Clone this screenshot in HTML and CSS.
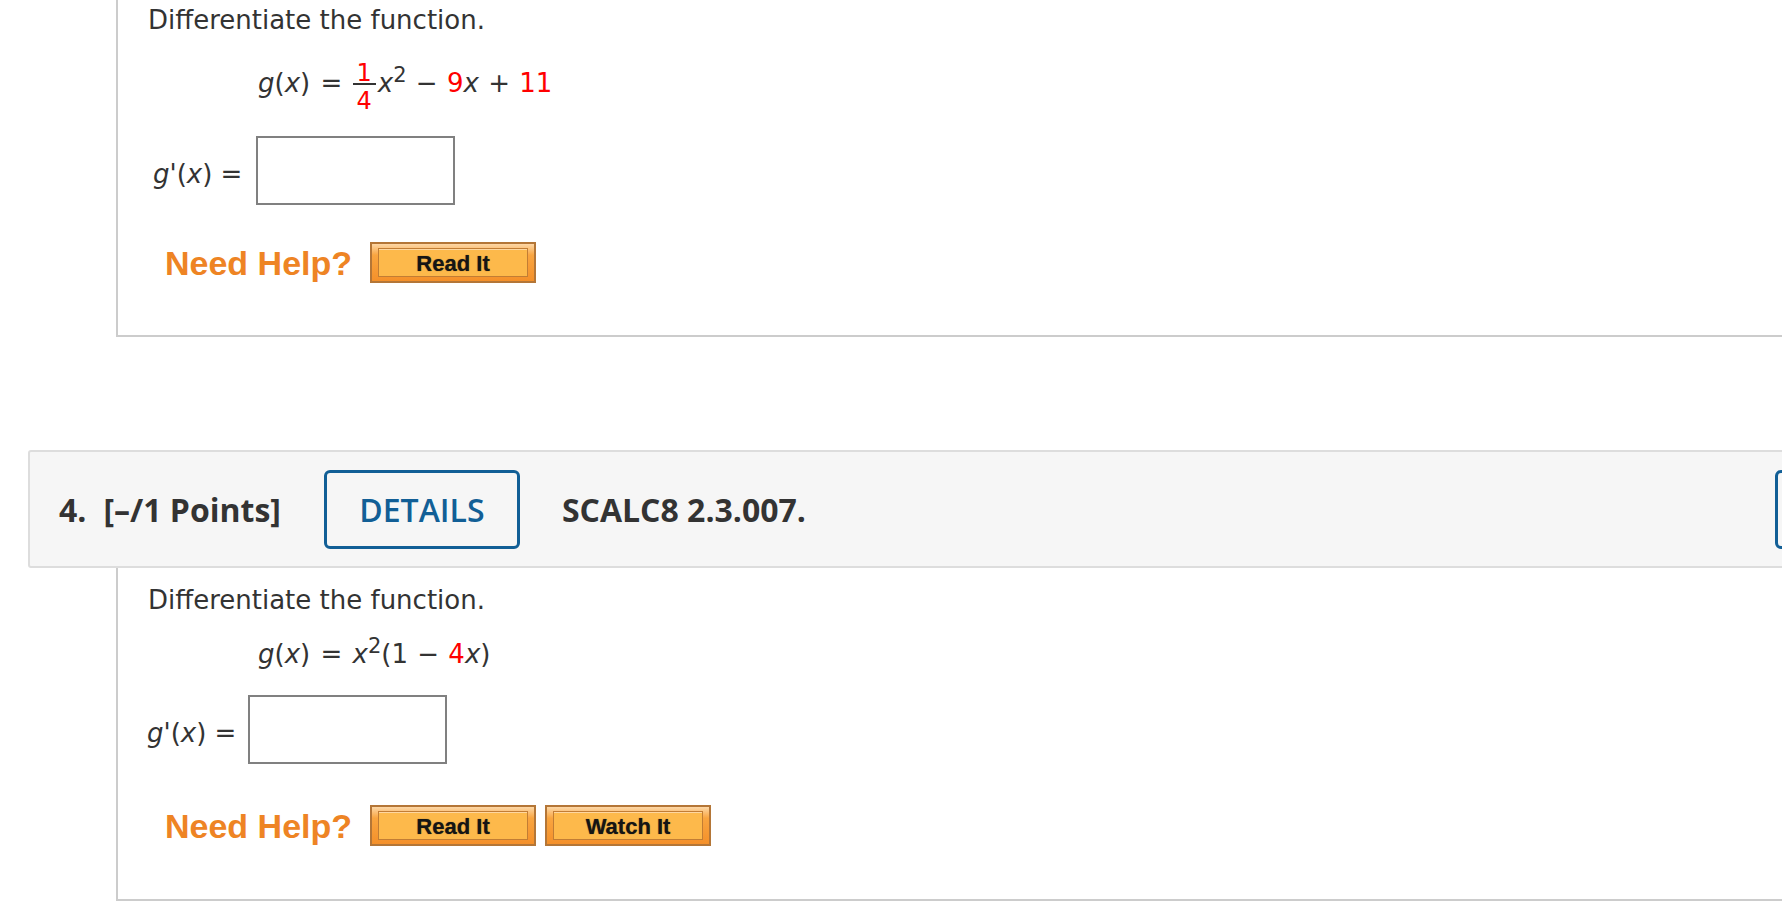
FILE: index.html
```html
<!DOCTYPE html>
<html lang="en">
<head>
<meta charset="utf-8">
<title>SCALC8 2.3</title>
<link rel="stylesheet" href="styles.css">
</head>
<body>
<div class="page">
  <section class="card card-first">
    <p class="prompt">Differentiate the function.</p>
    <div class="eq eq-1"><i>g</i>(<i>x</i>) <span class="op">=</span> <span class="frac"><span class="num">1</span><span class="den">4</span></span><i>x</i><sup>2</sup> <span class="bin">−</span> <span class="red">9</span><i>x</i> <span class="bin">+</span> <span class="red">11</span></div>
    <div class="answer answer-1"><span class="label"><i>g</i>'(<i>x</i>) =</span><input class="box" type="text" aria-label="answer"></div>
    <div class="help help-1"><span class="need">Need Help?</span><button class="hbtn" type="button"><span>Read It</span></button></div>
  </section>

  <div class="qhead">
    <span class="qnum">4.</span>
    <span class="pts">[–/1 Points]</span>
    <span class="details">DETAILS</span>
    <span class="code">SCALC8 2.3.007.</span>
    <span class="notes" aria-label="My notes"></span>
  </div>

  <section class="card card-second">
    <p class="prompt">Differentiate the function.</p>
    <div class="eq eq-2"><i>g</i>(<i>x</i>) <span class="op">=</span> <i>x</i><sup>2</sup>(1 <span class="bin">−</span> <span class="red">4</span><i>x</i>)</div>
    <div class="answer answer-2"><span class="label"><i>g</i>'(<i>x</i>) =</span><input class="box" type="text" aria-label="answer"></div>
    <div class="help help-2"><span class="need">Need Help?</span><button class="hbtn" type="button"><span>Read It</span></button><button class="hbtn" type="button"><span>Watch It</span></button></div>
  </section>
</div>
</body>
</html>
```

FILE: styles.css
```css
html, body {
  margin: 0;
  padding: 0;
  overflow: hidden;
  background: #ffffff;
}

body {
  width: 1782px;
  height: 914px;
  font-family: "DejaVu Sans", Verdana, sans-serif;
  color: #333333;
}

.page {
  width: 2000px;
}

/* question cards */
.card {
  width: 1800px;
  margin-left: 116px;
  border-left: 2px solid #cccccc;
  border-bottom: 2px solid #cccccc;
}

.card-first {
  padding: 5px 0 52px;
}

.card-second {
  padding: 17px 0 53px;
}

.prompt {
  margin: 0 0 0 30px;
  font-size: 26px;
  line-height: 30px;
}

.eq {
  font-size: 26px;
  line-height: 30px;
  margin-left: 140px;
  white-space: nowrap;
}

.eq-1 {
  margin-top: 33px;
}

.eq-2 {
  margin-top: 24px;
}

.eq i,
.label i {
  font-style: italic;
}

.op {
  margin: 0 2px;
}

.bin {
  margin: 0 1px;
}

.red {
  color: #ff0000;
}

.eq sup {
  font-size: 21px;
  line-height: 0;
  vertical-align: 10px;
}

.frac {
  display: inline-flex;
  flex-direction: column;
  vertical-align: 11.5px;
  margin: -40px 2px -40px 0;
  font-size: 24px;
  line-height: 20px;
  color: #ff0000;
  text-align: center;
}

.num {
  padding: 0 4px;
  border-bottom: 2px solid #333333;
}

.den {
  padding: 6px 4px 0;
}

/* answer row */
.answer {
  display: flex;
  align-items: flex-start;
}

.answer-1 {
  margin: 38px 0 0 35px;
}

.answer-2 {
  margin: 26px 0 0 29px;
}

.label {
  font-size: 26px;
  line-height: 30px;
  margin-top: 23px;
  white-space: nowrap;
}

.box {
  box-sizing: border-box;
  width: 199px;
  height: 69px;
  margin: 0 0 0 14px;
  padding: 0;
  border: 2px solid #808080;
  border-radius: 0;
  background: #ffffff;
  outline: none;
}

.answer-2 .box {
  margin-left: 12px;
}

/* need help row */
.help {
  display: flex;
  align-items: center;
  height: 41px;
  margin-left: 47px;
}

.help-1 {
  margin-top: 37px;
}

.help-2 {
  margin-top: 41px;
}

.need {
  font-family: "Liberation Sans", Arial, sans-serif;
  font-weight: bold;
  font-size: 34px;
  line-height: 38px;
  color: #ee8424;
  margin-right: 18px;
  white-space: nowrap;
}

.hbtn {
  box-sizing: border-box;
  display: flex;
  width: 166px;
  height: 41px;
  margin: 0 9px 0 0;
  padding: 4px 6px;
  border: 2px solid #b47637;
  background: linear-gradient(#fdd7a6 0%, #f9a540 30%, #f4902a 100%);
  font: bold 22px "Liberation Sans", Arial, sans-serif;
  color: #151515;
  cursor: pointer;
}

.hbtn span {
  flex: 1;
  display: flex;
  align-items: center;
  justify-content: center;
  padding-top: 3px;
  line-height: 1;
  border: 1px solid #c27d34;
  background: #fdb94b;
  box-shadow: inset 0 1px 0 #fed7a0;
  text-shadow: 0 0 1px rgba(0, 0, 0, 0.6);
}

/* question header */
.qhead {
  box-sizing: border-box;
  display: flex;
  align-items: center;
  width: 1974px;
  height: 118px;
  margin: 113px 0 0 28px;
  padding: 0 29px;
  border: 2px solid #dddddd;
  border-radius: 3px;
  background: #f6f6f6;
  font-family: "Open Sans", "DejaVu Sans", sans-serif;
  font-weight: 700;
  font-size: 32px;
  color: #333333;
  white-space: nowrap;
}

.qnum {
  margin-right: 17px;
}

.details {
  box-sizing: border-box;
  display: flex;
  align-items: center;
  justify-content: center;
  flex: none;
  width: 196px;
  height: 79px;
  margin-left: 43px;
  border: 3px solid #125f96;
  border-radius: 6px;
  color: #125f96;
  font-weight: 600;
}

.code {
  margin-left: 42px;
}

.notes {
  box-sizing: border-box;
  flex: none;
  width: 196px;
  height: 79px;
  margin-left: auto;
  border: 3px solid #125f96;
  border-radius: 6px;
}
```
